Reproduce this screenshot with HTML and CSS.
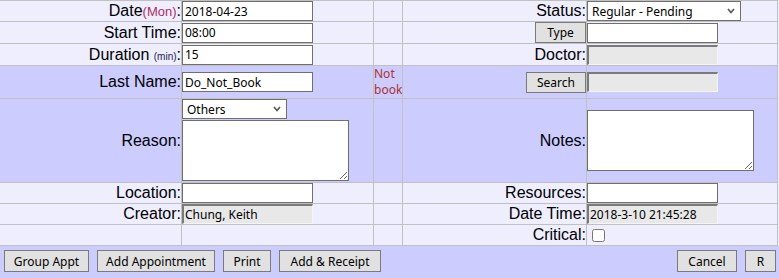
FILE: index.html
```html
<!DOCTYPE html>
<html lang="en">
<head>
  <meta charset="UTF-8">
  <title>Appointment</title>
  <link rel="stylesheet" href="styles.css">
</head>
<body>

<form id="formAppt">
  <div class="form-grid">
    <!-- row 1 -->
    <div class="cell lbl"><span>Date<span class="day">(Mon)</span>:</span></div>
    <div class="cell"><input type="text" class="txt" value="2018-04-23"></div>
    <div class="cell"></div>
    <div class="cell lbl"><span>Status:</span></div>
    <div class="cell">
      <div class="sel sel-status">
        <select><option>Regular - Pending</option></select>
        <svg class="chev" width="8" height="6" viewBox="0 0 8 6"><polyline points="1,1 4,4.5 7,1" fill="none" stroke="#555" stroke-width="1.6"/></svg>
      </div>
    </div>

    <!-- row 2 -->
    <div class="cell lbl"><span>Start Time:</span></div>
    <div class="cell"><input type="text" class="txt" value="08:00"></div>
    <div class="cell"></div>
    <div class="cell lbl"><button type="button" class="btn btn-type">Type</button></div>
    <div class="cell"><input type="text" class="txt"></div>

    <!-- row 3 -->
    <div class="cell lbl"><span>Duration <span class="unit">(min)</span>:</span></div>
    <div class="cell"><input type="text" class="txt" value="15"></div>
    <div class="cell"></div>
    <div class="cell lbl"><span>Doctor:</span></div>
    <div class="cell"><input type="text" class="txt ro" readonly></div>

    <!-- row 4 -->
    <div class="cell hi lbl"><span>Last Name:</span></div>
    <div class="cell hi"><input type="text" class="txt" value="Do_Not_Book"></div>
    <div class="cell hi note">Not book</div>
    <div class="cell hi lbl"><button type="button" class="btn btn-search">Search</button></div>
    <div class="cell hi"><input type="text" class="txt ro" readonly></div>

    <!-- row 5 -->
    <div class="cell hi lbl"><span>Reason:</span></div>
    <div class="cell hi stack">
      <div class="sel sel-reason">
        <select><option>Others</option></select>
        <svg class="chev" width="8" height="6" viewBox="0 0 8 6"><polyline points="1,1 4,4.5 7,1" fill="none" stroke="#555" stroke-width="1.6"/></svg>
      </div>
      <textarea class="area"></textarea>
    </div>
    <div class="cell hi"></div>
    <div class="cell hi lbl"><span>Notes:</span></div>
    <div class="cell hi"><textarea class="area"></textarea></div>

    <!-- row 6 -->
    <div class="cell lbl"><span>Location:</span></div>
    <div class="cell"><input type="text" class="txt"></div>
    <div class="cell"></div>
    <div class="cell lbl"><span>Resources:</span></div>
    <div class="cell"><input type="text" class="txt"></div>

    <!-- row 7 -->
    <div class="cell lbl"><span>Creator:</span></div>
    <div class="cell"><input type="text" class="txt ro" value="Chung, Keith" readonly></div>
    <div class="cell"></div>
    <div class="cell lbl"><span>Date Time:</span></div>
    <div class="cell"><input type="text" class="txt ro" value="2018-3-10 21:45:28" readonly></div>

    <!-- row 8 -->
    <div class="cell"></div>
    <div class="cell"></div>
    <div class="cell"></div>
    <div class="cell lbl"><span>Critical:</span></div>
    <div class="cell"><input type="checkbox" class="chk"></div>
  </div>

  <div class="btn-bar">
    <button type="button" class="btn w-group">Group Appt</button>
    <button type="button" class="btn w-add">Add Appointment</button>
    <button type="button" class="btn w-print">Print</button>
    <button type="button" class="btn w-receipt">Add &amp; Receipt</button>
    <button type="button" class="btn w-cancel push">Cancel</button>
    <button type="button" class="btn w-r">R</button>
  </div>
</form>

</body>
</html>
```

FILE: styles.css
```css
body {
  margin: 0;
  background: #eeeeff;
  font-family: "Liberation Sans", Arial, sans-serif;
  color: #000;
}
.form-grid {
  display: grid;
  grid-template-columns: 181px 191px 28px 183px 190px;
  grid-template-rows: 20px 21px 21px 32px 83px 20px 20px 20px;
  gap: 1px;
  padding: 1px 1px 1px 0;
  width: max-content;
  background: #c0c0c0;
}
.cell {
  display: flex;
  align-items: center;
  background: #eeeeff;
  min-width: 0;
}
.cell.hi {
  background: #ccccff;
}
.lbl {
  justify-content: flex-end;
  font-size: 16px;
  white-space: nowrap;
}
.day {
  font-size: 13px;
  color: #b03060;
}
.unit {
  font-size: 10px;
  color: #222255;
}
.note {
  align-items: flex-start;
  font: 12px/16px "Noto Sans", sans-serif;
  color: #b03030;
}
.stack {
  flex-direction: column;
  align-items: flex-start;
  justify-content: flex-start;
  gap: 1px;
}
.txt {
  box-sizing: border-box;
  width: 131px;
  height: 20px;
  margin: 0;
  padding: 0 2px;
  border: 1px solid #6f6f6f;
  background: #fff;
  font: 12px "Noto Sans", sans-serif;
  color: #000;
  outline: none;
}
.txt.ro {
  padding: 0 1px;
  background: #e8e8e8;
  border-top: 2px solid #7a7a7a;
  border-left: 2px solid #7a7a7a;
  border-right: 1px solid #f4f4f4;
  border-bottom: 1px solid #f4f4f4;
}
.sel {
  position: relative;
  display: inline-block;
}
.sel select {
  appearance: none;
  -webkit-appearance: none;
  box-sizing: border-box;
  height: 20px;
  margin: 0;
  padding: 0 0 0 4px;
  border: 1px solid #6f6f6f;
  border-radius: 0;
  background: #fff;
  font: 12px "Noto Sans", sans-serif;
  color: #000;
  display: block;
}
.sel-status select {
  width: 154px;
}
.sel-reason select {
  width: 105px;
}
.chev {
  position: absolute;
  right: 6px;
  top: 7px;
  pointer-events: none;
}
.area {
  box-sizing: border-box;
  width: 167px;
  height: 60px;
  margin: 0;
  padding: 2px;
  border: 1px solid #6f6f6f;
  background: #fff;
  font: 12px "Noto Sans", sans-serif;
}
.cell.hi > .area {
  height: 61px;
}
.chk {
  width: 13px;
  height: 13px;
  margin: 0 0 0 5px;
}
.btn {
  box-sizing: border-box;
  height: 22px;
  margin: 0;
  padding: 0;
  border: 1px solid #7a7a7a;
  border-radius: 0;
  background: #e1e1e1;
  font: 12px "Noto Sans", sans-serif;
  color: #000;
}
.btn-type {
  width: 51px;
  height: 21px;
  align-self: flex-end;
}
.btn-search {
  width: 60px;
  height: 21px;
}
.btn-bar {
  display: flex;
  gap: 8px;
  box-sizing: border-box;
  height: 32px;
  padding: 4px 3px 0 4px;
  background: #ccccff;
  width: 779px;
}
.push {
  margin-left: auto;
}
.w-group { width: 85px; }
.w-add { width: 118px; }
.w-print { width: 48px; }
.w-receipt { width: 102px; }
.w-cancel { width: 60px; }
.w-r { width: 31px; }
```
